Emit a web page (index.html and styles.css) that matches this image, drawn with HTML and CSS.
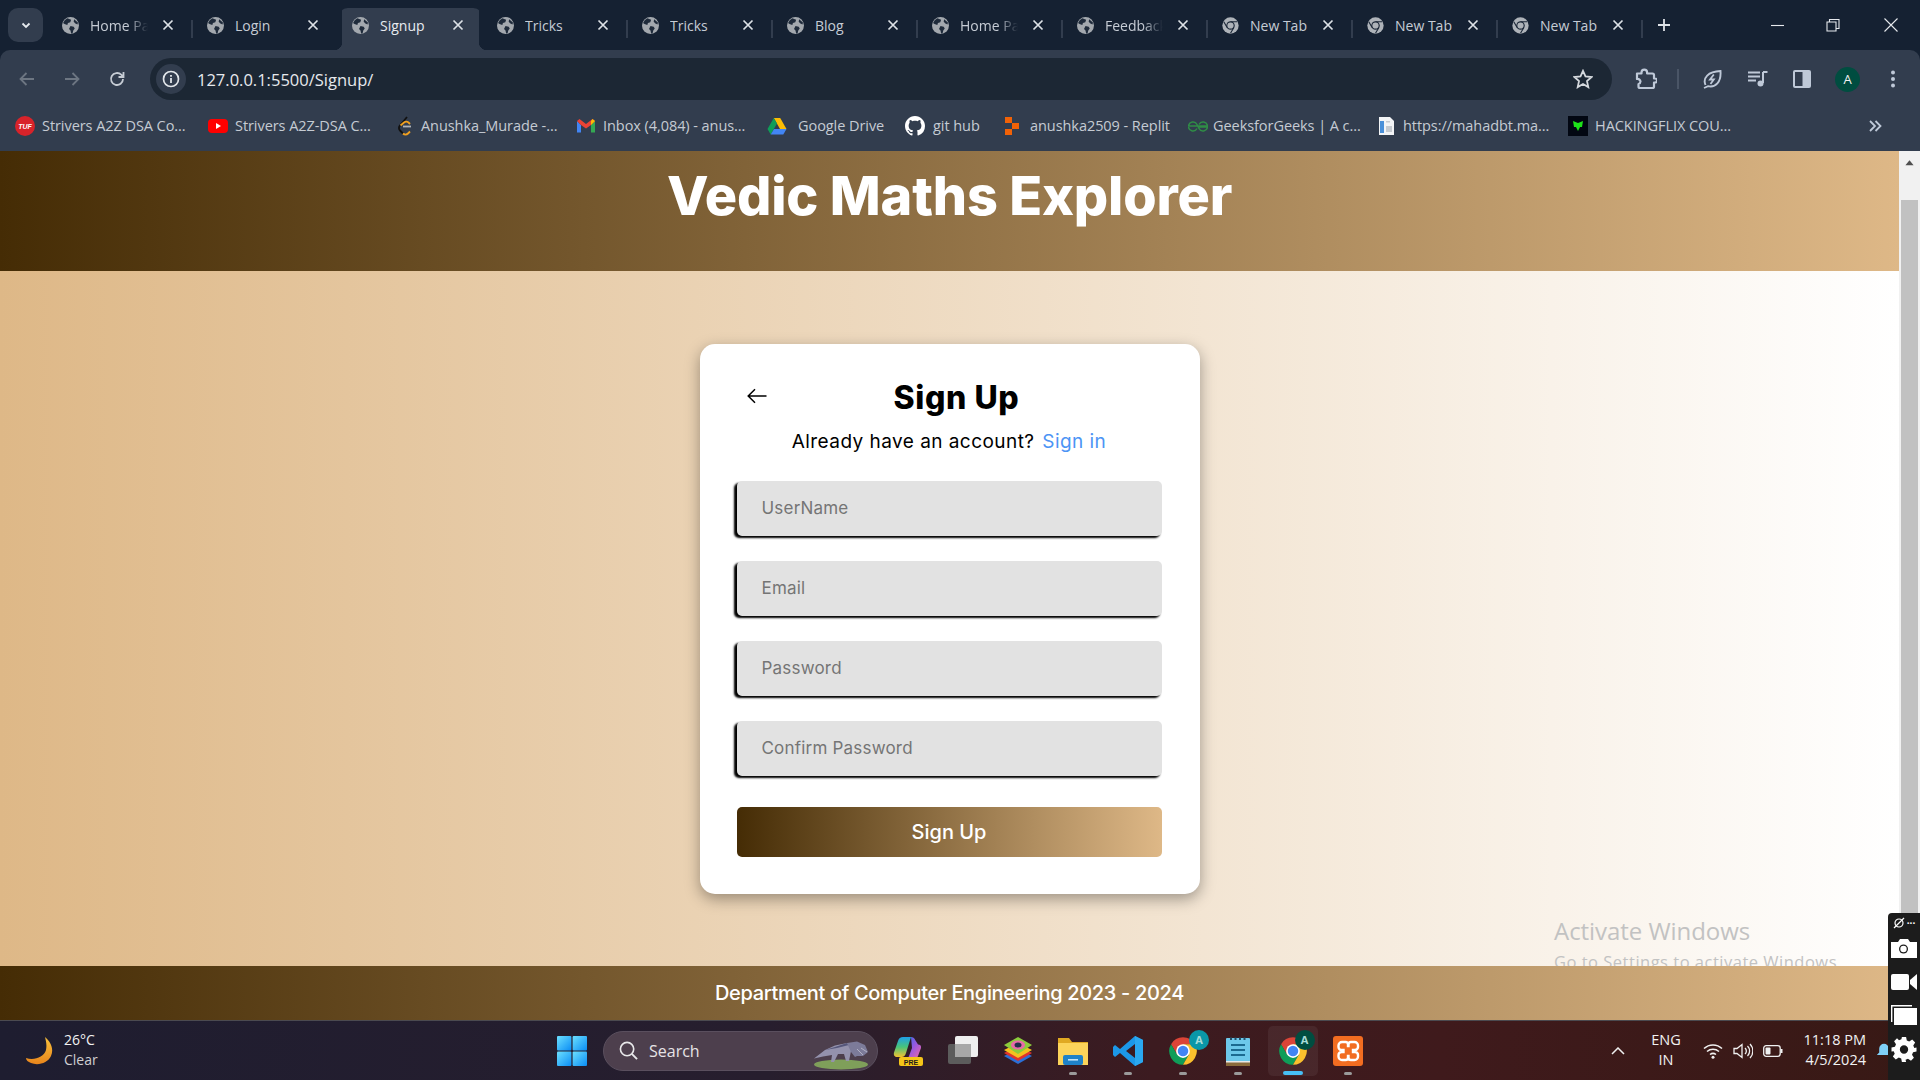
FILE: index.html
```html
<!DOCTYPE html>
<html lang="en">
<head>
<meta charset="utf-8">
<title>Signup</title>
<link rel="stylesheet" href="styles.css">
</head>
<body>
<svg class="sprite" aria-hidden="true">
  <defs>
    <symbol id="globe" viewBox="0 0 16 16">
      <circle cx="8" cy="8" r="8" fill="#a3a8ae"/>
      <path d="M5 1.200 8.600 2.600 7.800 5 5.600 5.600 5 7.600 2.400 6.600 1 5.600A8 8 0 0 1 5 1.200ZM8 8.400l3 .8 1 1.600-1.400 1.800-.6 2.600-1.400.4-.6-3-1.400-1.200ZM11.400 2.200 15 5.200 14.600 7 12.600 6 11 4.400Z" fill="#1f2b3b"/>
    </symbol>
    <symbol id="chrome" viewBox="0 0 24 24">
      <path d="M12 12 7.240 14.750 2.470 6.500A11 11 0 0 1 21.530 6.500H12Z" fill="#db4437"/>
      <path d="M12 12 16.760 14.750 12 23A11 11 0 0 1 2.470 6.500L7.240 14.750Z" fill="#0f9d58"/>
      <path d="M12 12V6.500H21.530A11 11 0 0 1 12 23L16.760 14.750Z" fill="#fbc02d"/>
      <circle cx="12" cy="12" r="5.500" fill="#fff"/>
      <circle cx="12" cy="12" r="4.200" fill="#4285f4"/>
    </symbol>
    <symbol id="chromegrey" viewBox="0 0 24 24">
      <circle cx="12" cy="12" r="11.500" fill="#aeb3b9"/>
      <path d="M21.500 6.700H12M7.200 14.700 2.500 6.700M16.800 14.700 12 23" stroke="#1c2838" stroke-width="1.600" fill="none"/>
      <circle cx="12" cy="12" r="6" fill="#1c2838"/>
      <circle cx="12" cy="12" r="4.400" fill="#aeb3b9"/>
    </symbol>
    <symbol id="x" viewBox="0 0 12 12">
      <path d="M1.500 1.500 10.500 10.500M10.500 1.500 1.500 10.500" stroke="currentColor" stroke-width="1.700" fill="none"/>
    </symbol>
  </defs>
</svg>

<div class="screen">
  <header class="browser">
    <div class="tabstrip">
      <button class="tabmenu">
        <svg class="ic10" viewBox="0 0 12 12"><path d="M2.500 4.500 6 8l3.500-3.500" stroke="#e6eaef" stroke-width="1.800" fill="none"/></svg>
      </button>
      <div class="tab"><svg class="tabicon"><use href="#globe"/></svg><span class="tabtext fade">Home Page</span><svg class="tabclose"><use href="#x"/></svg></div>
      <div class="tab nosep"><svg class="tabicon"><use href="#globe"/></svg><span class="tabtext">Login</span><svg class="tabclose"><use href="#x"/></svg></div>
      <div class="tab active nosep"><svg class="tabicon"><use href="#globe"/></svg><span class="tabtext">Signup</span><svg class="tabclose"><use href="#x"/></svg></div>
      <div class="tab"><svg class="tabicon"><use href="#globe"/></svg><span class="tabtext">Tricks</span><svg class="tabclose"><use href="#x"/></svg></div>
      <div class="tab"><svg class="tabicon"><use href="#globe"/></svg><span class="tabtext">Tricks</span><svg class="tabclose"><use href="#x"/></svg></div>
      <div class="tab"><svg class="tabicon"><use href="#globe"/></svg><span class="tabtext">Blog</span><svg class="tabclose"><use href="#x"/></svg></div>
      <div class="tab"><svg class="tabicon"><use href="#globe"/></svg><span class="tabtext fade">Home Page</span><svg class="tabclose"><use href="#x"/></svg></div>
      <div class="tab"><svg class="tabicon"><use href="#globe"/></svg><span class="tabtext fade">Feedback</span><svg class="tabclose"><use href="#x"/></svg></div>
      <div class="tab"><svg class="tabicon"><use href="#chromegrey"/></svg><span class="tabtext">New Tab</span><svg class="tabclose"><use href="#x"/></svg></div>
      <div class="tab"><svg class="tabicon"><use href="#chromegrey"/></svg><span class="tabtext">New Tab</span><svg class="tabclose"><use href="#x"/></svg></div>
      <div class="tab"><svg class="tabicon"><use href="#chromegrey"/></svg><span class="tabtext">New Tab</span><svg class="tabclose"><use href="#x"/></svg></div>
      <svg class="newtab" viewBox="0 0 14 14"><path d="M7 1v12M1 7h12" stroke="#dfe3e8" stroke-width="1.800" fill="none"/></svg>
      <div class="winctl">
        <svg class="winbtn" viewBox="0 0 14 14"><path d="M0 7.500h13" stroke="#e6e9ed" stroke-width="1.100" fill="none"/></svg>
        <svg class="winbtn" viewBox="0 0 14 14"><path d="M1 4h9v9H1ZM3.500 4V1.500h9.500v9H10" stroke="#e6e9ed" stroke-width="1.100" fill="none"/></svg>
        <svg class="winbtn" viewBox="0 0 14 14"><path d="M.5.5l13 13M13.500.5l-13 13" stroke="#e6e9ed" stroke-width="1.100" fill="none"/></svg>
      </div>
    </div>

    <div class="toolbar">
      <div class="navgroup">
        <svg class="ic20" viewBox="0 0 20 20"><path d="M17 10H4M9.500 4 3.500 10l6 6" stroke="#6d7682" stroke-width="1.800" fill="none"/></svg>
        <svg class="ic20" viewBox="0 0 20 20"><path d="M3 10h13M10.500 4l6 6-6 6" stroke="#6d7682" stroke-width="1.800" fill="none"/></svg>
        <svg class="ic20" viewBox="0 0 20 20"><path d="M16 10a6 6 0 1 1-1.800-4.300L16.500 8M16.500 3v5h-5" stroke="#c6ccd4" stroke-width="1.800" fill="none"/></svg>
      </div>
      <div class="omnibox">
        <span class="siteinfo">
          <svg class="ic18" viewBox="0 0 18 18"><circle cx="9" cy="9" r="7.500" stroke="#e2e6ea" stroke-width="1.700" fill="none"/><path d="M9 8v5M9 5v1.800" stroke="#e2e6ea" stroke-width="1.800"/></svg>
        </span>
        <span class="url">127.0.0.1:5500/Signup/</span>
        <svg class="star" viewBox="0 0 20 20"><path d="M10 1.800 12.500 7.400l6.100.6-4.600 4.100 1.300 6-5.300-3.100-5.300 3.100 1.300-6L1.400 8l6.100-.6Z" stroke="#d5d9de" stroke-width="1.800" fill="none"/></svg>
      </div>
      <div class="actions">
        <svg class="act ext" viewBox="0 0 22 22"><path d="M2 5.500h4.500V4.500a2.800 2.800 0 0 1 5.600 0v1h5.400a1.500 1.500 0 0 1 1.500 1.500v3.500h1a2 2 0 0 1 0 4h-1v4a1.500 1.500 0 0 1-1.500 1.500H5a1.500 1.500 0 0 1-1.500-1.500V16a2.800 2.800 0 0 0 2-2.500A3 3 0 0 0 2 11Z" stroke="#bfc9d8" stroke-width="2.200" stroke-linejoin="round" fill="none"/></svg>
        <span class="actsep"></span>
        <svg class="act leaf" viewBox="0 0 20 20"><path d="M3.500 16C.500 9 6 2.500 18.500 2c.8 11-5 17-12.500 15.200L2 19" stroke="#bfc9d8" stroke-width="1.900" fill="none"/><path d="M11.800 5.500 8 10.500h3.800L8.500 15" stroke="#bfc9d8" stroke-width="1.800" fill="none"/></svg>
        <svg class="act media" viewBox="0 0 20 20"><path d="M0 3.500h12M0 7.500h12M0 11.500h8" stroke="#bfc9d8" stroke-width="1.800"/><path d="M15 3v11" stroke="#bfc9d8" stroke-width="2"/><path d="M15 3h4.500" stroke="#bfc9d8" stroke-width="2"/><circle cx="12.500" cy="14.500" r="3" fill="#bfc9d8"/></svg>
        <svg class="act panel" viewBox="0 0 18 18"><rect x="0" y="0" width="18" height="18" rx="2" fill="#bfc9d8"/><rect x="2" y="2" width="7.500" height="14" fill="#323d4e"/></svg>
        <span class="avatar">A</span>
        <svg class="act dots" viewBox="0 0 4 18"><circle cx="2" cy="2.500" r="2" fill="#bfc9d8"/><circle cx="2" cy="9" r="2" fill="#bfc9d8"/><circle cx="2" cy="15.500" r="2" fill="#bfc9d8"/></svg>
      </div>
    </div>

    <div class="bookmarks">
      <div class="bm">
        <svg class="bmicon" viewBox="0 0 20 20"><circle cx="10" cy="10" r="10" fill="#d8232a"/><text x="10" y="12.500" class="tuf">TUF</text></svg>
        <span>Strivers A2Z DSA Co...</span>
      </div>
      <div class="bm">
        <svg class="bmicon" viewBox="0 0 20 20"><rect x="0" y="3" width="20" height="14" rx="4" fill="#f00"/><path d="M8 7v6l5-3Z" fill="#fff"/></svg>
        <span>Strivers A2Z-DSA C...</span>
      </div>
      <div class="bm">
        <svg class="bmicon" viewBox="0 0 20 20"><path d="M12 1 5 9.500a3.500 3.500 0 0 0 0 5L8 17.500" stroke="#111" stroke-width="1.800" fill="none"/><path d="M8 17.500a3.500 3.500 0 0 0 5 0l2-2" stroke="#f0a020" stroke-width="1.800" fill="none"/><path d="M8 10.500h8" stroke="#b0b3b8" stroke-width="1.800"/><path d="M5.500 9.500 9 6.500a3.500 3.500 0 0 1 4.500 0l1.500 1.500" stroke="#f0a020" stroke-width="1.800" fill="none"/></svg>
        <span>Anushka_Murade -...</span>
      </div>
      <div class="bm">
        <svg class="bmicon" viewBox="0 0 20 20"><path d="M1 5v11.500h4V9Z" fill="#4285f4"/><path d="M19 5v11.500h-4V9Z" fill="#34a853"/><path d="M1 5l4 4 5 3.500L15 9l4-4-2.500-2L10 8 3.500 3Z" fill="#ea4335"/><path d="M16.500 3 19 5l-4 4V5Z" fill="#fbbc04"/></svg>
        <span>Inbox (4,084) - anus...</span>
      </div>
      <div class="bm">
        <svg class="bmicon" viewBox="0 0 20 20"><path d="M6.800 2h6.400l6.300 11H13Z" fill="#fbbc04"/><path d="M6.800 2 .5 13l3.200 5.500L10 7.500Z" fill="#0f9d58"/><path d="M3.700 18.500h12.600l3.200-5.500H7Z" fill="#4285f4"/></svg>
        <span>Google Drive</span>
      </div>
      <div class="bm">
        <svg class="bmicon" viewBox="0 0 16 16"><path fill="#fff" d="M8 0C3.580 0 0 3.580 0 8c0 3.540 2.290 6.530 5.470 7.590.4.070.55-.17.55-.38 0-.19-.01-.82-.01-1.490-2.010.37-2.530-.49-2.690-.94-.09-.23-.48-.94-.82-1.130-.28-.15-.68-.52-.01-.53.63-.01 1.080.58 1.230.82.720 1.210 1.870.870 2.330.660.070-.520.280-.870.510-1.070-1.780-.2-3.640-.89-3.640-3.950 0-.870.310-1.590.820-2.150-.080-.200-.360-1.020.080-2.120 0 0 .670-.210 2.200.820.640-.180 1.320-.270 2-.270s1.360.090 2 .270c1.530-1.040 2.200-.820 2.200-.820.440 1.100.160 1.920.080 2.120.510.560.820 1.270.820 2.150 0 3.070-1.870 3.750-3.650 3.950.290.250.540.730.540 1.480 0 1.070-.010 1.930-.010 2.200 0 .210.150.460.550.380A8.010 8.010 0 0 0 16 8c0-4.420-3.580-8-8-8Z"/></svg>
        <span>git hub</span>
      </div>
      <div class="bm">
        <svg class="bmicon" viewBox="0 0 20 20"><path d="M2 1h7v6H2ZM9 7h7v6H9ZM2 13h7v6H2Z" fill="#f26207"/></svg>
        <span>anushka2509 - Replit</span>
      </div>
      <div class="bm">
        <svg class="bmicon" viewBox="0 0 20 20"><path d="M10 11h9.500a4.500 4.500 0 0 1-8.500 1.500L9 8.500A4.500 4.500 0 0 0 .5 10H10M10 10v1M10 10h9.500A4.500 4.500 0 0 0 11 8.500M9 12.500A4.500 4.500 0 0 1 .5 11" stroke="#2f8d46" stroke-width="1.500" fill="none"/></svg>
        <span>GeeksforGeeks | A c...</span>
      </div>
      <div class="bm">
        <svg class="bmicon" viewBox="0 0 20 20"><path d="M3 1h11l4 4v14H3Z" fill="#f2f4f6"/><rect x="4" y="5" width="4" height="12" fill="#4a90d9"/><rect x="10" y="10" width="6" height="6" fill="#c5cad0"/><rect x="10" y="5" width="4" height="1.500" fill="#c5cad0"/></svg>
        <span>https://mahadbt.ma...</span>
      </div>
      <div class="bm">
        <svg class="bmicon" viewBox="0 0 20 20"><rect width="20" height="20" fill="#020712"/><path d="M5 5l5 2 5-2-1 6-2 0-2 4-2-4-2 0Z" fill="#1ee21a"/></svg>
        <span>HACKINGFLIX COU...</span>
      </div>
      <svg class="bmmore" viewBox="0 0 14 14"><path d="M2 2l5 5-5 5M7.500 2l5 5-5 5" stroke="#bfc9d8" stroke-width="1.800" fill="none"/></svg>
    </div>
  </header>

  <div class="viewport">
    <div class="page">
      <div class="sitehead"><h1>Vedic Maths Explorer</h1></div>
      <main class="content">
        <section class="card">
          <div class="cardhead">
            <svg class="back" viewBox="0 0 20 16"><path d="M19.500 8H1.500M8 1.200 1.200 8 8 14.800" stroke="#000" stroke-width="1.500" fill="none"/></svg>
            <h2>Sign Up</h2>
          </div>
          <p class="already">Already have an account? <a href="#">Sign in</a></p>
          <form class="fields">
            <input class="field" type="text" placeholder="UserName">
            <input class="field" type="email" placeholder="Email">
            <input class="field" type="password" placeholder="Password">
            <input class="field" type="password" placeholder="Confirm Password">
            <button class="submit" type="button">Sign Up</button>
          </form>
        </section>
        <div class="activate">
          <div class="act1">Activate Windows</div>
          <div class="act2">Go to Settings to activate Windows.</div>
        </div>
      </main>
      <footer class="sitefoot">Department of Computer Engineering 2023 - 2024</footer>
    </div>
    <div class="scrollbar">
      <svg class="scrollup" viewBox="0 0 10 6"><path d="M5 0l4.500 5.500H.5Z" fill="#505050"/></svg>
      <div class="thumb"></div>
    </div>
  </div>

  <footer class="taskbar">
    <div class="weather">
      <svg class="moon" viewBox="0 0 28 28"><defs><linearGradient id="mg" x1="0" y1="0" x2="0" y2="1"><stop offset="0" stop-color="#f9c23c"/><stop offset="1" stop-color="#e8851c"/></linearGradient></defs><path d="M19 0c6 5 9 12 6 19-3 7-13 10-20 7-3-1-5-3-5-5 8 3 18-1 20-8 1-5 0-9-1-13Z" fill="url(#mg)"/></svg>
      <div class="wtext"><div>26°C</div><div class="wdim">Clear</div></div>
    </div>
    <svg class="start" viewBox="0 0 30 30"><defs><linearGradient id="wg" x1="0" y1="0" x2="1" y2="1"><stop offset="0" stop-color="#6ce0ff"/><stop offset="1" stop-color="#0a8df5"/></linearGradient></defs><rect width="14.400" height="14.400" rx="1" fill="url(#wg)"/><rect x="15.600" width="14.400" height="14.400" rx="1" fill="url(#wg)"/><rect y="15.600" width="14.400" height="14.400" rx="1" fill="url(#wg)"/><rect x="15.600" y="15.600" width="14.400" height="14.400" rx="1" fill="url(#wg)"/></svg>
    <div class="search">
      <svg class="searchicon" viewBox="0 0 20 20"><circle cx="8.500" cy="8.500" r="7" stroke="#e8e8ea" stroke-width="1.700" fill="none"/><path d="M13.500 13.500 19 19" stroke="#e8e8ea" stroke-width="2"/></svg>
      <span>Search</span>
      <svg class="anteater" viewBox="0 0 56 40"><ellipse cx="28" cy="33.500" rx="27" ry="5" fill="#7f9f5a"/><path d="M1 27.500 12 19 22 14.500 34 12 40 14 38 20 36 30H33L31 23H25L21 31H18L19 24 10 25.500Z" fill="#9492ad"/><path d="M12 19 22 16 34 12 36 14 24 17Z" fill="#55567a"/><path d="M34 12 44 10.500 52 14 55 21 50 25 44 25 42 26 38 21Z" fill="#7c7b99"/><path d="M44 18 50 24M48 17 54 21" stroke="#b2b1c4" stroke-width="1"/></svg>
    </div>
    <div class="dock">
      <div class="dockitem">
        <svg class="appicon" viewBox="0 0 30 30"><defs><linearGradient id="cg1" x1="0" y1="0" x2="0" y2="1"><stop offset="0" stop-color="#1fa0e8"/><stop offset=".5" stop-color="#48c47a"/><stop offset="1" stop-color="#f2c230"/></linearGradient><linearGradient id="cg2" x1="0" y1="0" x2="1" y2="1"><stop offset="0" stop-color="#2c6ee8"/><stop offset=".5" stop-color="#9a58e0"/><stop offset="1" stop-color="#f26aa0"/></linearGradient></defs><path d="M10 1h8l-5 16c-.8 2.500-2 4-4.500 4H4C1 21 .5 18.500 1 16.500L5 5c.8-2.500 2.500-4 5-4Z" fill="url(#cg1)"/><path d="M18 1c2 0 3.500 1.200 4.200 3L25 8.500c2 0 3.500 1 3 3.500L25 20c-.8 2-2 3-4 3h-9c2 0 3.500-1 4-3l3-8Z" fill="url(#cg2)"/><rect x="6" y="21" width="24" height="9" rx="2" fill="#f5c518"/><text x="18" y="28.500" class="pre">PRE</text></svg>
      </div>
      <div class="dockitem">
        <svg class="appicon" viewBox="0 0 30 30"><rect x="0" y="8" width="23" height="20" rx="2" fill="#5c5c5c"/><rect x="7" y="0" width="23" height="21" rx="2" fill="#efefef"/><rect x="7" y="8" width="16" height="13" fill="#a8a8a8"/></svg>
      </div>
      <div class="dockitem">
        <svg class="appicon" viewBox="0 0 30 30"><path d="M15 13 29 20 15 28 1 20Z" fill="#2b6fd6"/><path d="M15 10 29 17 15 25 1 17Z" fill="#e0342c"/><path d="M15 7 29 14 15 22 1 14Z" fill="#f4c11f"/><path d="M15 1 29 9 15 18 1 9Z" fill="#8ccc3c"/><ellipse cx="15" cy="9" rx="7" ry="4.500" fill="#e86aa8"/><ellipse cx="15" cy="9" rx="3.500" ry="2.500" fill="#23304a"/></svg>
      </div>
      <div class="dockitem running">
        <svg class="appicon" viewBox="0 0 30 30"><path d="M0 2h11l3 4h16v23H0Z" fill="#e0a922"/><rect x="0" y="7" width="30" height="22" fill="#fcd45a"/><rect x="5" y="19" width="20" height="10" rx="2" fill="#1f82c8"/><rect x="10" y="23" width="10" height="1.600" fill="#bfe3f8"/></svg>
      </div>
      <div class="dockitem running">
        <svg class="appicon" viewBox="0 0 30 30"><path d="M22 0 30 4V26L22 30 7 17 2 21 0 19V11L2 9 7 13ZM22 8 13 15 22 22Z" fill="#1c98e8"/><path d="M22 0 30 4V26L22 30Z" fill="#2aa8f0"/></svg>
      </div>
      <div class="dockitem running">
        <svg class="appicon" viewBox="0 0 24 24"><use href="#chrome"/></svg>
        <span class="appbadge teal">A</span>
      </div>
      <div class="dockitem running">
        <svg class="appicon" viewBox="0 0 30 30"><rect x="3" y="2" width="24" height="27" rx="1" fill="#6dc8ea"/><rect x="3" y="26" width="24" height="4" fill="#8a6a3c"/><rect x="3" y="25" width="24" height="1.500" fill="#e8e8e8"/><path d="M8 1.500v2.500M12.500 1.500v2.500M17 1.500v2.500M21.500 1.500v2.500" stroke="#24506a" stroke-width="2"/><path d="M8 9h14M8 14h14M8 19h14" stroke="#1c6a90" stroke-width="2"/></svg>
      </div>
      <div class="dockitem current">
        <svg class="appicon" viewBox="0 0 24 24"><use href="#chrome"/></svg>
        <span class="appbadge dark">A</span>
      </div>
      <div class="dockitem running">
        <svg class="appicon" viewBox="0 0 30 30"><rect width="30" height="30" rx="3" fill="#f26d21"/><path d="M9 6h3.500a2.500 2.500 0 0 1 2.500 2.500V10h.5V8.500A2.500 2.500 0 0 1 18 6h3.500A3.500 3.500 0 0 1 25 9.500V11a3 3 0 0 1-3 3h-2v2h2a3 3 0 0 1 3 3v1.500A3.500 3.500 0 0 1 21.500 24H18a2.500 2.500 0 0 1-2.500-2.500V20H15v1.500a2.500 2.500 0 0 1-2.500 2.500H9a3.500 3.500 0 0 1-3.500-3.500V19a3 3 0 0 1 3-3h2v-2h-2a3 3 0 0 1-3-3V9.500A3.500 3.500 0 0 1 9 6Z" fill="none" stroke="#fff" stroke-width="2.400"/></svg>
      </div>
    </div>
    <div class="tray">
      <svg class="chev" viewBox="0 0 14 8"><path d="M1 7l6-6 6 6" stroke="#f0f0f0" stroke-width="1.500" fill="none"/></svg>
      <div class="lang"><div>ENG</div><div>IN</div></div>
      <svg class="trayicon" viewBox="0 0 20 16"><path d="M1 5.500a13 13 0 0 1 18 0M4 8.500a9 9 0 0 1 12 0M7 11.500a5 5 0 0 1 6 0" stroke="#f0f0f0" stroke-width="1.500" fill="none"/><circle cx="10" cy="14.300" r="1.500" fill="#f0f0f0"/></svg>
      <svg class="trayicon" viewBox="0 0 20 16"><path d="M1 5.500h3L9 1.500v13L4 10.500H1Z" stroke="#f0f0f0" stroke-width="1.300" fill="none"/><path d="M12 5a4 4 0 0 1 0 6M14.500 3a7 7 0 0 1 0 10M17 1a10 10 0 0 1 0 14" stroke="#f0f0f0" stroke-width="1.300" fill="none"/></svg>
      <svg class="trayicon" viewBox="0 0 20 14"><rect x=".7" y="1.700" width="16.500" height="10.600" rx="2.500" stroke="#f0f0f0" stroke-width="1.300" fill="none"/><rect x="2.500" y="3.500" width="5" height="7" rx="1" fill="#f0f0f0"/><path d="M18.500 5v4" stroke="#f0f0f0" stroke-width="2"/></svg>
      <div class="clock"><div>11:18 PM</div><div>4/5/2024</div></div>
      <svg class="bell" viewBox="0 0 20 20"><path d="M10 1a6 6 0 0 1 6 6v5l3 3H1l3-3V7a6 6 0 0 1 6-6Z" fill="#7fd0f7"/></svg>
    </div>
  </footer>

  <aside class="capture">
    <div class="capbar">
      <svg class="capsmall" viewBox="0 0 12 12"><circle cx="6" cy="6" r="4" stroke="#fff" stroke-width="1.200" fill="none"/><path d="M1 11 11 1" stroke="#fff" stroke-width="1.200"/></svg>
      <span class="capdots">···</span>
    </div>
    <svg class="capicon cam" viewBox="0 0 26 20"><path d="M0 4h7l2-3h8l2 3h7v16H0Z" fill="#fff"/><circle cx="12.500" cy="11" r="4.500" fill="#1c1c1c"/><circle cx="12.500" cy="11" r="3.200" fill="#fff"/></svg>
    <svg class="capicon vid" viewBox="0 0 26 16"><rect x="0" y="0" width="18" height="16" rx="2" fill="#fff"/><path d="M19 6 26 0v16l-7-6Z" fill="#fff"/></svg>
    <svg class="capicon stk" viewBox="0 0 26 20"><path d="M.7 17V.7H21" stroke="#fff" stroke-width="1.400" fill="none"/><rect x="3" y="3" width="23" height="17" fill="#fff"/></svg>
    <svg class="capicon gear" viewBox="0 0 24 24"><path d="M12 8a4 4 0 1 0 0 8 4 4 0 0 0 0-8Zm-2-8h4l.7 3.300 2.300 1 2.900-1.800 2.800 2.800-1.800 2.900 1 2.300L24 10v4l-3.300.7-1 2.300 1.800 2.900-2.800 2.800-2.900-1.800-2.300 1L14 24h-4l-.7-3.300-2.300-1-2.900 1.800-2.800-2.800L3.100 16l-1-2.300L0 14v-4l3.300-.7 1-2.300-1.800-2.900 2.800-2.800L7.200 3.100l2.300-1Z" fill="#fff" fill-rule="evenodd"/></svg>
  </aside>
</div>
</body>
</html>
```

FILE: styles.css
```css
* { box-sizing: border-box; }
html, body { margin: 0; height: 100%; overflow: hidden; }
body { font-family: "Open Sans", "Noto Sans", sans-serif; }
.sprite { position: absolute; width: 0; height: 0; }
.screen { position: relative; width: 1920px; height: 1080px; display: flex; flex-direction: column; overflow: hidden; }

/* browser chrome */
.browser { height: 151px; flex: none; background: #152132; display: flex; flex-direction: column; }
.tabstrip { height: 50px; display: flex; align-items: flex-start; padding-left: 8px; position: relative; }
.tabmenu { width: 35px; height: 34px; margin: 8px 5px 0 0; padding: 0; border: 0; border-radius: 10px; background: #323d4e; display: flex; align-items: center; justify-content: center; }
.ic10 { width: 12px; height: 12px; }
.tab { position: relative; width: 145px; height: 42px; margin-top: 8px; display: flex; align-items: center; padding: 0 0 8px 14px; color: #c6ccd5; font-size: 14px; }
.tab::after { content: ""; position: absolute; right: 0; top: 12px; width: 2px; height: 18px; background: #323d4e; }
.tab.nosep::after { display: none; }
.tab.active { background: linear-gradient(#323d4e, #323d4e) no-repeat center / 137px 100%; color: #e7ebf0; border-radius: 10px 10px 0 0; }
.tab.active::before { content: ""; position: absolute; left: -4px; right: -4px; bottom: 0; height: 8px; background:
  radial-gradient(circle at 0 0, #152132 8px, #323d4e 8.500px) left bottom / 8px 8px no-repeat,
  radial-gradient(circle at 100% 0, #152132 8px, #323d4e 8.500px) right bottom / 8px 8px no-repeat; }
.tabicon { width: 17px; height: 17px; flex: none; }
.tabtext { margin: 0 4px 0 11px; width: 68px; overflow: hidden; white-space: nowrap; flex: none; }
.tabtext.fade { width: 58px; margin-right: 14px; -webkit-mask-image: linear-gradient(to right, #000 65%, transparent 100%); mask-image: linear-gradient(to right, #000 65%, transparent 100%); }
.tabclose { width: 12px; height: 12px; color: #dde1e6; flex: none; }
.newtab { width: 14px; height: 14px; margin: 18px 0 0 14px; }
.winctl { position: absolute; right: 22px; top: 18px; display: flex; gap: 44px; }
.winbtn { width: 14px; height: 14px; }
.winbtn:first-child { margin-right: -3px; }

.toolbar { height: 50px; background: #323d4e; border-radius: 10px 10px 0 0; display: flex; align-items: center; padding: 8px 0 0 17px; }
.navgroup { display: flex; gap: 25px; width: 133px; }
.ic20 { width: 20px; height: 20px; }
.omnibox { width: 1462px; height: 42px; border-radius: 21px; background: #1c2734; display: flex; align-items: center; padding: 0 19px 0 6px; }
.siteinfo { width: 30px; height: 30px; border-radius: 50%; background: #323d4e; display: flex; align-items: center; justify-content: center; }
.ic18 { width: 18px; height: 18px; }
.url { margin-left: 11px; color: #e6e9ed; font-size: 16.500px; flex: 1; }
.star { width: 20px; height: 20px; }
.actions { display: flex; align-items: center; margin-left: 23px; }
.act { flex: none; }
.ext { width: 22px; height: 22px; }
.actsep { width: 2px; height: 20px; background: #4a5566; margin: 0 23px 0 20px; }
.leaf { width: 20px; height: 20px; }
.media { width: 20px; height: 20px; margin-left: 26px; }
.panel { width: 18px; height: 18px; margin-left: 25px; }
.avatar { width: 25px; height: 25px; border-radius: 50%; margin-left: 24px; background: #004d40; color: #f0f0f0; font-size: 13px; display: flex; align-items: center; justify-content: center; }
.dots { width: 4px; height: 18px; margin-left: 31px; }

.bookmarks { height: 51px; background: #323d4e; display: grid; grid-template-columns: 193px 187px 181px 191px 138px 98px 185px 188px 192px 300px auto; align-items: center; padding-left: 15px; color: #c5cbd3; font-size: 14.500px; letter-spacing: -0.06px; white-space: nowrap; }
.bm { display: flex; align-items: center; gap: 7px; }
.bm:nth-child(3) { gap: 6px; }
.bm:nth-child(5) { gap: 11px; }
.bm:nth-child(6) { gap: 8px; }
.bm:nth-child(8) { gap: 5px; }
.bmicon { width: 20px; height: 20px; flex: none; }
.bmmore { width: 14px; height: 14px; }
.tuf { font-family: "Liberation Sans", sans-serif; font-size: 7px; font-weight: 700; font-style: italic; fill: #fff; text-anchor: middle; }

/* page */
.viewport { height: 869px; flex: none; display: flex; }
.page { width: 1899px; display: flex; flex-direction: column; font-family: Inter, "Open Sans", sans-serif; }
.sitehead { height: 120px; flex: none; background: linear-gradient(to right, #452c05, #deb887); color: #fff; text-align: center; }
.sitehead h1 { margin: 0; padding-top: 10px; font-size: 54px; font-weight: 800; line-height: 70px; letter-spacing: -0.2px; }
.content { position: relative; flex: 1; overflow: hidden; display: flex; align-items: center; justify-content: center; background: linear-gradient(to right, #deb887, #fff); }
.card { width: 500px; height: 550px; padding: 30px 38px 0 37px; border-radius: 15px; background: #fff; box-shadow: 0 5px 15px rgba(0, 0, 0, .35); }
.cardhead { height: 48px; display: flex; align-items: center; }
.back { width: 20px; height: 16px; margin: -4px 0 0 10px; flex: none; }
.cardhead h2 { margin: 0 0 0 127px; color: #000; font-size: 32px; font-weight: 800; line-height: 48px; letter-spacing: 0.6px; }
.already { margin: 6px 0 0; text-align: center; font-size: 19px; line-height: 28px; letter-spacing: 0.45px; color: #000; }
.already a { color: #4c94f5; text-decoration: none; margin-left: 2px; }
.fields { margin-top: 25px; display: flex; flex-direction: column; }
.field { width: 425px; height: 55px; margin-bottom: 25px; padding: 0 25px; border: 0; border-radius: 5px; background: #e2e2e2; font-family: inherit; font-size: 17px; letter-spacing: 0.2px; box-shadow: -2.500px 2px 2px #000; outline: none; }
.field::placeholder { color: #757575; opacity: 1; }
.submit { width: 425px; height: 50px; margin-top: 6px; border: 0; border-radius: 5px; background: linear-gradient(to right, #452c05, #deb887); color: #fff; font-family: inherit; font-size: 20px; font-weight: 500; }
.activate { position: absolute; left: 1554px; top: 643px; color: #c2c2c2; font-family: "Open Sans", sans-serif; white-space: nowrap; }
.act1 { font-size: 24px; line-height: 34px; letter-spacing: -0.05px; }
.act2 { font-size: 16.500px; line-height: 22px; margin-top: 3px; letter-spacing: 0.5px; }
.sitefoot { height: 54px; flex: none; display: flex; align-items: center; justify-content: center; background: linear-gradient(to right, #452c05, #deb887); color: #fff; font-size: 20px; font-weight: 500; letter-spacing: -0.33px; }

.scrollbar { width: 21px; flex: none; background: #f1f1f1; display: flex; flex-direction: column; align-items: center; }
.scrollup { width: 9px; height: 6px; margin: 9px 0 0; }
.thumb { width: 17px; flex: 1; margin-top: 34px; background: #c1c1c1; }

/* taskbar */
.taskbar { height: 60px; flex: none; display: flex; align-items: center; border-top: 1px solid #4b4a50; color: #f2f2f2; background: linear-gradient(to right, #1e1d30 0, #271e2e 40%, #3c1b20 60%, #3f1a1c 75%, #381915 100%); }
.weather { width: 557px; flex: none; display: flex; align-items: center; padding-left: 26px; }
.moon { width: 28px; height: 28px; flex: none; }
.wtext { margin: -2px 0 0 10px; font-size: 14px; line-height: 20px; }
.wdim { color: #cfcfd2; }
.start { width: 30px; height: 30px; flex: none; }
.search { width: 275px; height: 40px; margin-left: 16px; padding: 0 8px 0 15px; flex: none; display: flex; align-items: center; border-radius: 20px; border: 1px solid #5a4f5e; background: #4d3f4d; font-size: 16px; color: #e6e3e6; }
.searchicon { width: 19px; height: 19px; flex: none; }
.search span { margin-left: 11px; flex: 1; }
.anteater { width: 56px; height: 40px; flex: none; }
.dock { display: flex; margin-left: 2px; }
.dockitem { position: relative; width: 55px; height: 50px; display: flex; align-items: center; justify-content: center; }
.appicon { width: 30px; height: 30px; }
.dockitem.running::after, .dockitem.current::after { content: ""; position: absolute; left: 50%; bottom: 1px; width: 8px; height: 3px; margin-left: -4px; border-radius: 2px; background: #9a9a9a; }
.dockitem.current { background: rgba(255, 255, 255, .06); border-radius: 5px; width: 50px; margin: 0 2.500px; }
.dockitem.current::after { width: 20px; margin-left: -10px; background: #47bff5; height: 4px; }
.appbadge { position: absolute; left: 32px; top: 4px; width: 20px; height: 20px; border-radius: 50%; display: flex; align-items: center; justify-content: center; font-size: 11px; font-weight: 700; color: #a8dcd8; }
.appbadge.teal { left: 34px; background: #0a97a8; }
.appbadge.dark { left: 27px; background: #004d40; }
.pre { font-family: "Liberation Sans", sans-serif; font-size: 7px; font-weight: 700; fill: #1c1c1c; text-anchor: middle; }
.tray { margin-left: auto; display: flex; align-items: center; font-size: 14.500px; line-height: 20px; }
.chev { width: 14px; height: 8px; flex: none; }
.lang { width: 36px; margin: -2px 0 0 23px; text-align: center; }
.trayicon { width: 20px; height: 16px; flex: none; margin-left: 10px; }
.lang + .trayicon { margin-left: 19px; }
.clock { margin: -2px 0 0 19px; width: 64px; text-align: right; white-space: nowrap; }
.bell { width: 16px; height: 20px; margin-left: 10px; margin-right: 28px; flex: none; }

.capture { position: absolute; right: 0; top: 913px; width: 32px; height: 167px; background: #1c1c1c; border-radius: 4px 0 0 0; display: flex; flex-direction: column; align-items: center; padding-top: 4px; }
.capbar { display: flex; align-items: center; gap: 2px; height: 12px; }
.capsmall { width: 12px; height: 12px; }
.capdots { color: #fff; font-size: 10px; font-weight: 700; line-height: 10px; }
.capicon { width: 26px; flex: none; }
.cam { height: 20px; margin-top: 9px; }
.vid { height: 16px; margin-top: 16px; }
.stk { height: 20px; margin-top: 15px; }
.gear { height: 25px; margin-top: 12px; }
```
